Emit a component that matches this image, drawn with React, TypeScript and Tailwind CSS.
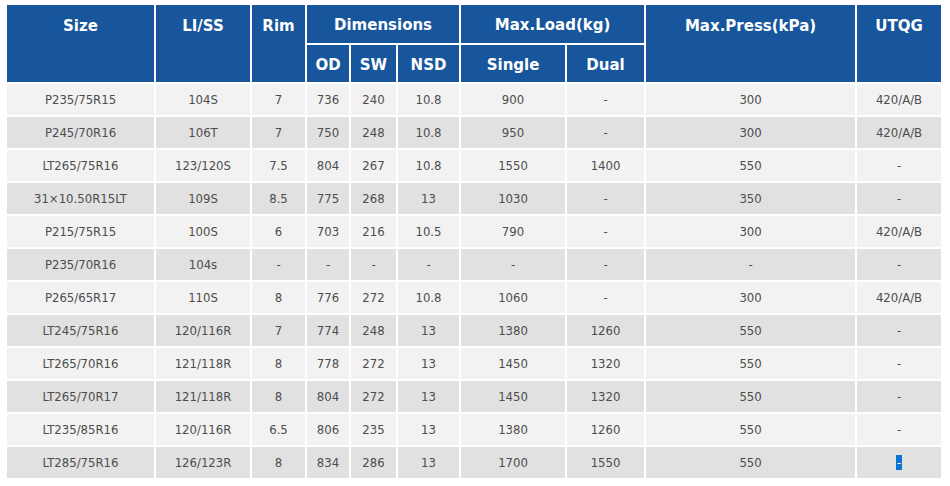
import React from 'react';

const rows = [
  ['P235/75R15', '104S', '7', '736', '240', '10.8', '900', '-', '300', '420/A/B'],
  ['P245/70R16', '106T', '7', '750', '248', '10.8', '950', '-', '300', '420/A/B'],
  ['LT265/75R16', '123/120S', '7.5', '804', '267', '10.8', '1550', '1400', '550', '-'],
  ['31×10.50R15LT', '109S', '8.5', '775', '268', '13', '1030', '-', '350', '-'],
  ['P215/75R15', '100S', '6', '703', '216', '10.5', '790', '-', '300', '420/A/B'],
  ['P235/70R16', '104s', '-', '-', '-', '-', '-', '-', '-', '-'],
  ['P265/65R17', '110S', '8', '776', '272', '10.8', '1060', '-', '300', '420/A/B'],
  ['LT245/75R16', '120/116R', '7', '774', '248', '13', '1380', '1260', '550', '-'],
  ['LT265/70R16', '121/118R', '8', '778', '272', '13', '1450', '1320', '550', '-'],
  ['LT265/70R17', '121/118R', '8', '804', '272', '13', '1450', '1320', '550', '-'],
  ['LT235/85R16', '120/116R', '6.5', '806', '235', '13', '1380', '1260', '550', '-'],
  ['LT285/75R16', '126/123R', '8', '834', '286', '13', '1700', '1550', '550', '-'],
];

const widths = [147, 94, 53, 42, 45, 61, 104, 77, 209, 84];

const TyreTable = () => {
  return (
    <div className="bg-white w-[950px] h-[486px] pt-[3px] pl-[5px]">
      <table
        className="table-fixed border-separate border-spacing-[2px] w-[938px]"
        style={{ fontFamily: '"DejaVu Sans", Tahoma, sans-serif' }}
      >
        <colgroup>
          {widths.map((w, i) => (
            <col key={i} style={{ width: w }} />
          ))}
        </colgroup>
        <thead className="text-white font-bold text-[15px]">
          <tr className="h-[38px]">
            <th rowSpan={2} className="bg-[#17569c] align-top leading-[38px] pt-[2px] px-0">Size</th>
            <th rowSpan={2} className="bg-[#17569c] align-top leading-[38px] pt-[2px] px-0">LI/SS</th>
            <th rowSpan={2} className="bg-[#17569c] align-top leading-[38px] pt-[2px] px-0">Rim</th>
            <th colSpan={3} className="bg-[#17569c] pt-[3px] px-0">Dimensions</th>
            <th colSpan={2} className="bg-[#17569c] pt-[3px] px-0">Max.Load(kg)</th>
            <th rowSpan={2} className="bg-[#17569c] align-top leading-[38px] pt-[2px] px-0">Max.Press(kPa)</th>
            <th rowSpan={2} className="bg-[#17569c] align-top leading-[38px] pt-[2px] px-0">UTQG</th>
          </tr>
          <tr className="h-[37px]">
            <th className="bg-[#17569c] pt-[3px] px-0">OD</th>
            <th className="bg-[#17569c] pt-[3px] px-0">SW</th>
            <th className="bg-[#17569c] pt-[3px] px-0">NSD</th>
            <th className="bg-[#17569c] pt-[3px] px-0">Single</th>
            <th className="bg-[#17569c] pt-[3px] px-0">Dual</th>
          </tr>
        </thead>
        <tbody className="text-[13px] text-[#4d4d4d] [font-stretch:condensed]">
          {rows.map((row, r) => (
            <tr key={r} className={`h-[31px] ${r % 2 === 0 ? 'bg-[#f2f2f2]' : 'bg-[#e1e1e1]'}`}>
              {row.map((cell, c) => (
                <td key={c} className="text-center p-0 pt-px">
                  {r === rows.length - 1 && c === 9 ? (
                    <span className="bg-[#0a74d6] text-white px-px">{cell}</span>
                  ) : (
                    cell
                  )}
                </td>
              ))}
            </tr>
          ))}
        </tbody>
      </table>
    </div>
  );
};

export default function App() {
  return <TyreTable />;
}
